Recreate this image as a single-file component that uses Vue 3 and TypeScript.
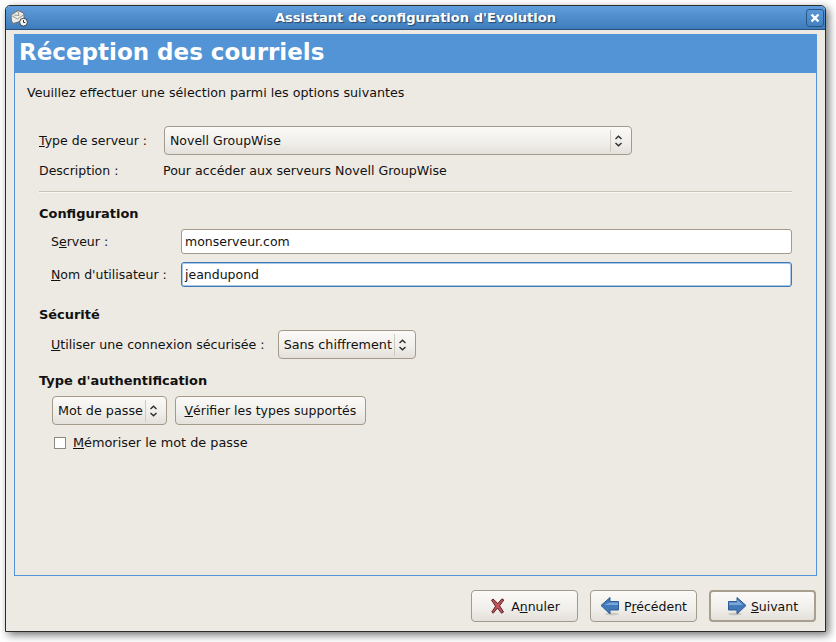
<template>
  <div class="page">
    <div class="window">
      <div class="titlebar">
        <svg class="app-icon" width="18" height="18" viewBox="0 0 18 18">
          <path d="M1 6 8 1.5 13.5 4 14.5 11 3.5 14.5 1.5 12Z" fill="#ecece8" stroke="#6f6f68" />
          <path d="M1.5 6.5 7.5 10 14 5.5M8 2.5 9 6.5 4 6" fill="none" stroke="#9a9a92" />
          <circle cx="13.5" cy="13.2" r="3.9" fill="#f6f6f4" stroke="#33404f" />
          <path d="M13.5 11v2.5h1.8" fill="none" stroke="#2c3440" />
        </svg>
        <span class="title">Assistant de configuration d'Evolution</span>
        <div class="close-btn">
          <svg width="10" height="10" viewBox="0 0 10 10">
            <path d="M1.5 1.5 8.5 8.5M8.5 1.5 1.5 8.5" stroke="#fff" stroke-width="2.4" />
          </svg>
        </div>
      </div>

      <div class="body">
        <div class="panel">
          <h1 class="heading">Réception des courriels</h1>
          <p class="intro">Veuillez effectuer une sélection parmi les options suivantes</p>

          <div class="form">
            <div class="row server-row">
              <label class="server-label"><u>T</u>ype de serveur :</label>
              <div class="combo server-combo">
                <span class="combo-text">Novell GroupWise</span>
                <span class="combo-sep"></span>
                <svg class="updown" width="9" height="12" viewBox="0 0 9 12">
                  <path d="M1.5 4 4.5 1.2 7.5 4M1.5 8 4.5 10.8 7.5 8" fill="none" stroke="#2e2e2e" stroke-width="1.4" />
                </svg>
              </div>
            </div>
            <div class="row desc-row">
              <span class="desc-label">Description :</span>
              <span class="desc-text">Pour accéder aux serveurs Novell GroupWise</span>
            </div>
            <div class="separator"></div>

            <h2 class="section first">Configuration</h2>
            <div class="row entry-row indent">
              <label class="entry-label">S<u>e</u>rveur :</label>
              <div class="entry">monserveur.com</div>
            </div>
            <div class="row entry-row indent second-entry">
              <label class="entry-label"><u>N</u>om d'utilisateur :</label>
              <div class="entry focused">jeandupond</div>
            </div>

            <h2 class="section security">Sécurité</h2>
            <div class="row indent security-row">
              <label class="secure-label"><u>U</u>tiliser une connexion sécurisée :</label>
              <div class="combo wide-text">
                <span class="combo-text">Sans chiffrement</span>
                <span class="combo-sep"></span>
                <svg class="updown" width="9" height="12" viewBox="0 0 9 12">
                  <path d="M1.5 4 4.5 1.2 7.5 4M1.5 8 4.5 10.8 7.5 8" fill="none" stroke="#2e2e2e" stroke-width="1.4" />
                </svg>
              </div>
            </div>

            <h2 class="section auth">Type d'authentification</h2>
            <div class="row auth-row">
              <div class="combo wide-text">
                <span class="combo-text">Mot de passe</span>
                <span class="combo-sep"></span>
                <svg class="updown" width="9" height="12" viewBox="0 0 9 12">
                  <path d="M1.5 4 4.5 1.2 7.5 4M1.5 8 4.5 10.8 7.5 8" fill="none" stroke="#2e2e2e" stroke-width="1.4" />
                </svg>
              </div>
              <div class="btn check-btn"><u>V</u>érifier les types supportés</div>
            </div>
            <div class="row check-row">
              <span class="checkbox"></span>
              <span class="check-text"><u>M</u>émoriser le mot de passe</span>
            </div>
          </div>
        </div>

        <div class="actions">
          <div class="btn action">
            <svg width="18" height="18" viewBox="0 0 18 18">
              <path d="M4 2 8.8 6.5 13 1.8 14.8 3 10.6 8.8 14.5 15 12.5 16.2 8.5 11 4.2 16.2 2.8 15 6.6 9.2 2.5 3.2Z" fill="#c4545c" stroke="#5d2024" stroke-width="1" stroke-linejoin="round" />
            </svg>
            <span>A<u>n</u>nuler</span>
          </div>
          <div class="btn action">
            <svg class="arrow" width="20" height="20" viewBox="0 0 20 20">
              <ellipse cx="12" cy="18" rx="7" ry="1.5" fill="#00000022" />
              <path d="M1 9.5 10 1.5V5.5H18.5V14H10V18Z" fill="#4279b8" stroke="#2f5c94" stroke-linejoin="round" />
              <path d="M10 6.5H18V9H4Z" fill="#7ba6d8" />
            </svg>
            <span>P<u>r</u>écédent</span>
          </div>
          <div class="btn action default-action">
            <svg class="arrow" width="20" height="20" viewBox="0 0 20 20">
              <ellipse cx="8" cy="18" rx="7" ry="1.5" fill="#00000022" />
              <path d="M19 9.5 10 1.5V5.5H1.5V14H10V18Z" fill="#4279b8" stroke="#2f5c94" stroke-linejoin="round" />
              <path d="M2 6.5H10V3.5L16 9H2Z" fill="#7ba6d8" />
            </svg>
            <span><u>S</u>uivant</span>
          </div>
        </div>
      </div>
    </div>
  </div>
</template>

<script setup lang="ts">
</script>

<style>
html,
body {
  margin: 0;
  background: #fff;
}
</style>

<style scoped>
.page {
  width: 836px;
  height: 642px;
  padding: 5px 0 0 5px;
  box-sizing: border-box;
  overflow: hidden;
  font-family: "DejaVu Sans", sans-serif;
  font-size: 12.5px;
  color: #111;
}

.window {
  width: 821px;
  height: 627px;
  box-sizing: border-box;
  display: flex;
  flex-direction: column;
  background: #ede9e3;
  border: 1px solid #2b2b2b;
  border-radius: 5px 5px 0 0;
  box-shadow: 3px 3px 8px rgba(0, 0, 0, 0.55);
}

.titlebar {
  height: 23px;
  flex: none;
  display: flex;
  align-items: center;
  position: relative;
  background: linear-gradient(#5f9ddc, #3f7cbb);
  border-bottom: 1px solid #2a4f78;
  border-radius: 4px 4px 0 0;
}

.app-icon {
  margin-left: 4px;
  flex: none;
}

.title {
  position: absolute;
  left: 0;
  right: 0;
  text-align: center;
  color: #fff;
  font-weight: bold;
  font-size: 13.05px;
  text-shadow: 1px 1px 1px #26486e;
}

.close-btn {
  position: absolute;
  right: 1px;
  top: 3px;
  width: 16px;
  height: 16px;
  display: flex;
  align-items: center;
  justify-content: center;
  border: 1px solid #2c5586;
  border-radius: 3px;
}

.body {
  flex: 1;
  display: flex;
  flex-direction: column;
  padding: 4px 8px 10px 8px;
}

.panel {
  height: 542px;
  flex: none;
  box-sizing: border-box;
  border: 1px solid #5294d6;
  border-top: none;
}

.heading {
  height: 39px;
  margin: 0 -1px;
  padding-left: 5px;
  line-height: 37px;
  background: #5294d6;
  color: #fff;
  font-size: 23px;
  font-weight: bold;
}

.intro {
  margin: 0;
  height: 40px;
  line-height: 40px;
  padding-left: 12px;
  font-size: 12.7px;
}

.form {
  margin: 13px 24px 0 24px;
}

.row {
  display: flex;
  align-items: center;
}

.server-row {
  height: 29px;
}

.server-label {
  width: 125px;
  flex: none;
}

.combo {
  height: 29px;
  box-sizing: border-box;
  display: flex;
  align-items: center;
  padding: 0 8px 0 5px;
  border: 1px solid #a39a8c;
  border-radius: 4px;
  background: linear-gradient(#fbfaf8, #f0eeea 60%, #e4e0da);
  white-space: nowrap;
}

.wide-text {
  font-size: 12.75px;
}

.server-combo {
  width: 468px;
}

.server-combo .combo-text {
  flex: 1;
}

.combo-sep {
  width: 1px;
  height: 22px;
  background: #cfc9bf;
  margin: 0 3px 0 2px;
  flex: none;
}

.updown {
  flex: none;
}

.desc-row {
  height: 18px;
  margin-top: 6px;
}

.desc-label {
  width: 124px;
  flex: none;
}

.desc-text {
  font-size: 12.62px;
}

.separator {
  height: 1px;
  margin-top: 12px;
  background: #c9c3b8;
  border-bottom: 1px solid #f8f7f4;
}

.section {
  margin: 0;
  height: 18px;
  line-height: 18px;
  font-size: 12.95px;
  font-weight: bold;
}

.section.first {
  margin-top: 12px;
}

.section.security {
  margin-top: 19px;
}

.section.auth {
  margin-top: 13px;
}

.indent {
  padding-left: 12px;
}

.entry-row {
  margin-top: 6px;
}

.second-entry {
  margin-top: 8px;
}

.entry-label {
  width: 130px;
  flex: none;
}

.entry {
  flex: 1;
  height: 25px;
  line-height: 23px;
  box-sizing: border-box;
  padding-left: 3px;
  background: #fff;
  border: 1px solid #a39a8c;
  border-radius: 3px;
}

.entry.focused {
  border: 1px solid #3c78b5;
  box-shadow: 0 0 0 1px #a9c7e6 inset;
}

.security-row {
  margin-top: 6px;
}

.secure-label {
  margin-right: 13px;
  font-size: 12.65px;
}

.auth-row {
  margin-top: 6px;
  padding-left: 13px;
  gap: 8px;
}

.btn {
  height: 29px;
  box-sizing: border-box;
  display: flex;
  align-items: center;
  justify-content: center;
  border: 1px solid #a39a8c;
  border-radius: 4px;
  background: linear-gradient(#fbfaf8, #f0eeea 60%, #e4e0da);
  white-space: nowrap;
}

.check-btn {
  width: 191px;
}

.check-row {
  margin-top: 10px;
  padding-left: 15px;
  gap: 7px;
}

.check-text {
  font-size: 12.85px;
}

.checkbox {
  width: 12px;
  height: 12px;
  box-sizing: border-box;
  background: #fff;
  border: 1px solid #8f887c;
}

.actions {
  display: flex;
  justify-content: flex-end;
  gap: 12px;
  margin-top: 14px;
  padding-right: 1px;
}

.action {
  width: 107px;
  height: 32px;
  gap: 4px;
}

.default-action {
  border: 2px solid #a89f91;
}
</style>
